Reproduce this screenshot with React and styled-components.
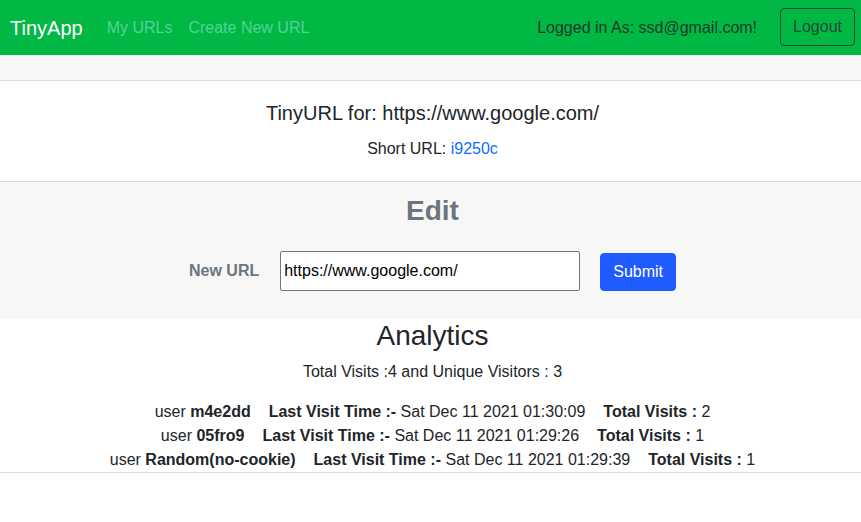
import React from "react";
import styled, { createGlobalStyle } from "styled-components";

const Global = createGlobalStyle`
  html, body { margin: 0; padding: 0; background: #fff; }
  body {
    font-family: "Liberation Sans", Arial, sans-serif;
    font-size: 16px;
    line-height: 1.5;
    color: #212529;
  }
  * { box-sizing: border-box; }
`;

const Navbar = styled.nav`
  height: 55px;
  background: #00b843;
  display: flex;
  align-items: center;
  padding: 0 6px 0 10px;
`;

const Brand = styled.a`
  font-size: 20px;
  line-height: 30px;
  color: #fff;
  text-decoration: none;
  margin-right: 16px;
`;

const NavLink = styled.a`
  font-size: 16px;
  color: #50d498;
  text-decoration: none;
  padding: 8px;
`;

const Spacer = styled.div`
  flex: 1;
`;

const LoggedIn = styled.span`
  color: #1b3a2a;
  font-size: 16px;
  margin-right: 23px;
`;

const OutlineButton = styled.button`
  font-family: inherit;
  font-size: 16px;
  line-height: 24px;
  padding: 6px 12px;
  background: transparent;
  color: #1d4a33;
  border: 1px solid #2a4638;
  border-radius: 4px;
  height: 38px;
  margin-top: -2px;
`;

const Band = styled.div`
  height: 26px;
  background: #f7f7f7;
  border-bottom: 1px solid #dcdcdc;
`;

const Info = styled.section`
  padding: 20px 0 20px 4px;
  text-align: center;
  border-bottom: 1px solid #dcdcdc;
`;

const InfoTitle = styled.h3`
  margin: 0 0 12px;
  font-size: 20px;
  font-weight: 400;
  line-height: 24px;
`;

const InfoLine = styled.p`
  margin: 0;
  line-height: 24px;
`;

const Link = styled.a`
  color: #0d6efd;
  text-decoration: none;
`;

const EditSection = styled.section`
  background: #f7f7f7;
  padding: 12px 0 28px 4px;
  text-align: center;
`;

const SectionTitle = styled.h2`
  margin: 0;
  font-size: 28px;
  line-height: 33.6px;
  font-weight: ${(p) => (p.$bold ? 700 : 400)};
  color: ${(p) => (p.$muted ? "#6c757d" : "#212529")};
`;

const FormRow = styled.form`
  margin: 23px 0 0 0;
  display: flex;
  justify-content: center;
  align-items: center;
`;

const Label = styled.label`
  font-weight: 700;
  color: #6c757d;
  margin-right: 21px;
`;

const Input = styled.input`
  width: 300px;
  height: 40px;
  border: 1px solid #767676;
  border-radius: 2px;
  padding: 0 3px;
  font-family: "Liberation Sans", Arial, sans-serif;
  font-size: 16px;
  color: #000;
  background: #fff;
  margin-right: 20px;
`;

const PrimaryButton = styled.button`
  font-family: inherit;
  font-size: 16px;
  line-height: 24px;
  height: 38px;
  padding: 6px 12px;
  margin-top: 2px;
  background: #1f5bff;
  border: 1px solid #1f5bff;
  color: #fff;
  border-radius: 4px;
`;

const Analytics = styled.section`
  text-align: center;
`;

const Summary = styled.p`
  margin: 8px 0 16px;
  line-height: 24px;
`;

const Centered = styled.div`
  padding-left: 4px;
`;

const Visits = styled.div`
  border-bottom: 1px solid #dcdcdc;
`;

const VisitRow = styled.div`
  line-height: 24px;
  white-space: pre;
  padding-left: 4px;
`;

const Segment = styled.span`
  & + & {
    margin-left: 18px;
  }
`;

const visits = [
  { user: "m4e2dd", time: "Sat Dec 11 2021 01:30:09", total: 2 },
  { user: "05fro9", time: "Sat Dec 11 2021 01:29:26", total: 1 },
  { user: "Random(no-cookie)", time: "Sat Dec 11 2021 01:29:39", total: 1 },
];

export default function App() {
  return (
    <>
      <Global />
      <Navbar>
        <Brand href="#">TinyApp</Brand>
        <NavLink href="#">My URLs</NavLink>
        <NavLink href="#">Create New URL</NavLink>
        <Spacer />
        <LoggedIn>Logged in As: ssd@gmail.com!</LoggedIn>
        <OutlineButton type="button">Logout</OutlineButton>
      </Navbar>
      <Band />
      <Info>
        <InfoTitle>TinyURL for: https://www.google.com/</InfoTitle>
        <InfoLine>
          Short URL: <Link href="#">i9250c</Link>
        </InfoLine>
      </Info>
      <EditSection>
        <SectionTitle $bold $muted>Edit</SectionTitle>
        <FormRow onSubmit={(e) => e.preventDefault()}>
          <Label htmlFor="newurl">New URL</Label>
          <Input id="newurl" defaultValue="https://www.google.com/" />
          <PrimaryButton type="submit">Submit</PrimaryButton>
        </FormRow>
      </EditSection>
      <Analytics>
        <Centered>
          <SectionTitle>Analytics</SectionTitle>
          <Summary>Total Visits :4 and Unique Visitors : 3</Summary>
        </Centered>
        <Visits>
          {visits.map((v) => (
            <VisitRow key={v.user}>
              <Segment>
                user <b>{v.user}</b>
              </Segment>
              <Segment>
                <b>Last Visit Time :-</b> {v.time}
              </Segment>
              <Segment>
                <b>Total Visits :</b> {v.total}
              </Segment>
            </VisitRow>
          ))}
        </Visits>
      </Analytics>
    </>
  );
}
